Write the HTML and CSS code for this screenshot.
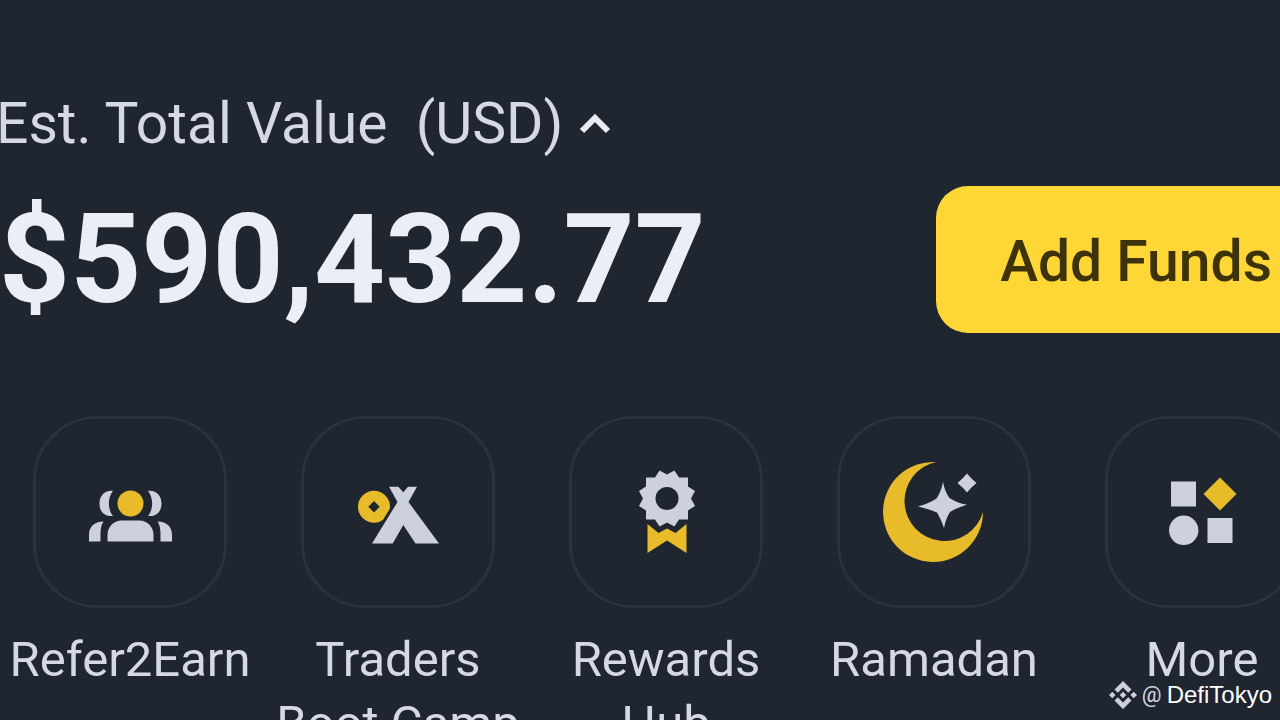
FILE: index.html
```html
<!DOCTYPE html>
<html lang="en">
<head>
	<meta charset="utf-8">
	<title>Wallet</title>
	<link rel="stylesheet" href="styles.css">
</head>
<body>
	<main class="wallet">
		<button type="button" class="total-label">Est. Total Value&nbsp; (USD)
			<svg class="chevron" viewBox="0 0 32 22"><path d="M3 18L16 5l13 13"/></svg>
		</button>

		<div class="balance">
			<h1 class="amount">$590,432.77</h1>
			<button type="button" class="add-funds">Add Funds</button>
		</div>

		<nav class="shortcuts">
			<a class="shortcut" href="#refer">
				<span class="tile">
					<svg class="icon" viewBox="0 0 120 120">
						<path d="M43 38.700C34 38 29.500 44 29.500 51.500S34 65 43 64C37.500 57 37.500 46 43 38.700zM78 38.700c9-.7 13.500 5.300 13.500 12.800S87 65 78 64c5.500-7 5.500-18 0-25.300z"/>
						<path d="M37.500 89.500V83c0-8 6-14.500 14-14.500h18c8 0 14 6.500 14 14.500v6.500z"/>
						<path d="M19 89.500V83c0-8 5-13.500 14.500-13.500C31 73 30.500 78 30.500 82v7.500zM102 89.500V83c0-8-5-13.500-14.500-13.500C90 73 90.500 78 90.500 82v7.500z"/>
						<circle class="gold" cx="60.500" cy="51.500" r="13"/>
					</svg>
				</span>
				<span class="name">Refer2Earn</span>
			</a>
			<a class="shortcut" href="#traders">
				<span class="tile">
					<svg class="icon" viewBox="0 0 120 120">
						<path class="gold" fill-rule="evenodd" d="M20 54.700a16 16 0 1 0 32 0a16 16 0 1 0-32 0zM36 49l5.700 5.700L36 60.400l-5.700-5.700z"/>
						<path class="tent" d="M51 34.700h9.300l5 5.500 4.700-5.500h9L70.500 50 101 91.500H77.500L65.300 73 54.700 91.500H34L59.500 50z"/>
					</svg>
				</span>
				<span class="name">Traders<br>Boot Camp</span>
			</a>
			<a class="shortcut" href="#rewards">
				<span class="tile">
					<svg class="icon" viewBox="0 0 120 120">
						<path fill-rule="evenodd" transform="translate(61 46.500)" d="M24 0L28 7.400 21 12V21H12L7.400 28 0 24-7.400 28-12 21H-21V12L-28 7.400-24 0-28-7.400-21-12V-21H-12L-7.400-28 0-24 7.400-28 12-21H21V-12L28-7.400zM-11.500 0a11.500 11.500 0 1 0 23 0a11.500 11.500 0 1 0-23 0z"/>
						<path class="gold" d="M41.500 72l11 9 8.500-4.500 8.500 4.500 11-9v29L61 88.500l-19.500 12.500z"/>
					</svg>
				</span>
				<span class="name">Rewards<br>Hub</span>
			</a>
			<a class="shortcut" href="#ramadan">
				<span class="tile">
					<svg class="icon" viewBox="0 0 120 120">
						<path class="gold" d="M62 10A50 50 0 1 0 109 60A40 40 0 1 1 62 10z"/>
						<path d="M69 30Q71 40 75.500 46Q83 51 93 52.700Q82 56 76 60Q72 66 70 76Q67 67 63 60.500Q55 57 44 54.500Q56 51 62.500 46.500Q67 40 69 30z"/>
						<path d="M93 21.500q4 5 9.500 9.500-5.500 4.500-9.500 9.500-4-5-9.500-9.500 5.500-4.500 9.500-9.500z"/>
					</svg>
				</span>
				<span class="name">Ramadan</span>
			</a>
			<a class="shortcut" href="#more">
				<span class="tile">
					<svg class="icon" viewBox="0 0 120 120">
						<rect x="29" y="29.500" width="25" height="25"/>
						<path class="gold" d="M78 25.500L94.500 42 78 58.500 61.500 42z"/>
						<circle cx="41.700" cy="78.300" r="14.700"/>
						<rect x="65.500" y="66" width="25" height="25"/>
					</svg>
				</span>
				<span class="name">More</span>
			</a>
		</nav>
	</main>

	<div class="credit">
		<svg class="credit-logo" viewBox="0 0 28 28">
			<path d="M14 0l8.500 8.500-3.300 3.300L14 6.600l-5.200 5.200-3.300-3.300zM14 28l8.500-8.500-3.300-3.300-5.200 5.200-5.200-5.200-3.300 3.300zM3.300 10.700L6.600 14l-3.300 3.300L0 14zM24.700 10.700L28 14l-3.300 3.300-3.300-3.300zM14 10.700l3.300 3.300-3.300 3.300-3.300-3.300z"/>
		</svg>
		<span class="at">@</span>
		<span>DefiTokyo</span>
	</div>
</body>
</html>
```
FILE: styles.css
```css
body {
	margin: 0;
	height: 100vh;
	overflow: hidden;
	background-color: #1f262f;
	color: #d5d9e4;
	font-family: Roboto, sans-serif;
}

/* the panel runs off both sides of the window */
.wallet {
	width: calc(100% + 60px);
	margin-left: -4px;
	padding-top: 88px;
}

.total-label {
	display: flex;
	align-items: center;
	gap: 16px;
	padding: 0;
	border: 0;
	background: none;
	color: inherit;
	font-family: inherit;
	font-size: 57px;
	line-height: 72px;
	white-space: nowrap;
}
.chevron {
	width: 32px;
	height: 22px;
	fill: none;
	stroke: #eaecf3;
	stroke-width: 6;
}

.balance {
	display: flex;
	justify-content: space-between;
	align-items: center;
	margin-top: 26px;
}
.amount {
	margin: 0;
	padding-left: 3px;
	color: #eceef5;
	font-size: 124px;
	font-weight: bold;
	line-height: 140px;
}
.add-funds {
	padding: 38px 64px 34px;
	border: 0;
	border-radius: 32px;
	background-color: #fed635;
	color: #3d3209;
	font-family: inherit;
	font-size: 57px;
	font-weight: 500;
	line-height: 75px;
	white-space: nowrap;
}

.shortcuts {
	display: grid;
	grid-template-columns: repeat(5, 1fr);
	margin-top: 83px;
}
.shortcut {
	display: flex;
	flex-direction: column;
	align-items: center;
	gap: 20px;
	color: inherit;
	text-align: center;
	text-decoration: none;
}
.tile {
	display: flex;
	align-items: center;
	justify-content: center;
	box-sizing: border-box;
	width: 194px;
	height: 192px;
	border: 3px solid #2b323c;
	border-radius: 64px;
}
.icon {
	width: 120px;
	height: 120px;
	fill: #cdd1dc;
}
.gold {
	fill: #e8bb2b;
}
.tent {
	stroke: #1f262f;
	stroke-width: 6;
	paint-order: stroke;
}
.name {
	font-size: 49px;
	line-height: 64px;
	white-space: nowrap;
}

.credit {
	position: absolute;
	right: 8px;
	bottom: 9px;
	display: flex;
	align-items: center;
	gap: 5px;
	color: #fff;
	font-family: "Liberation Sans", sans-serif;
	font-size: 24px;
	line-height: 32px;
}
.credit-logo {
	width: 28px;
	height: 28px;
	fill: #cdd1dc;
}
.at {
	color: #d5d9e4;
	font-family: Roboto, sans-serif;
	font-size: 22px;
}
```
